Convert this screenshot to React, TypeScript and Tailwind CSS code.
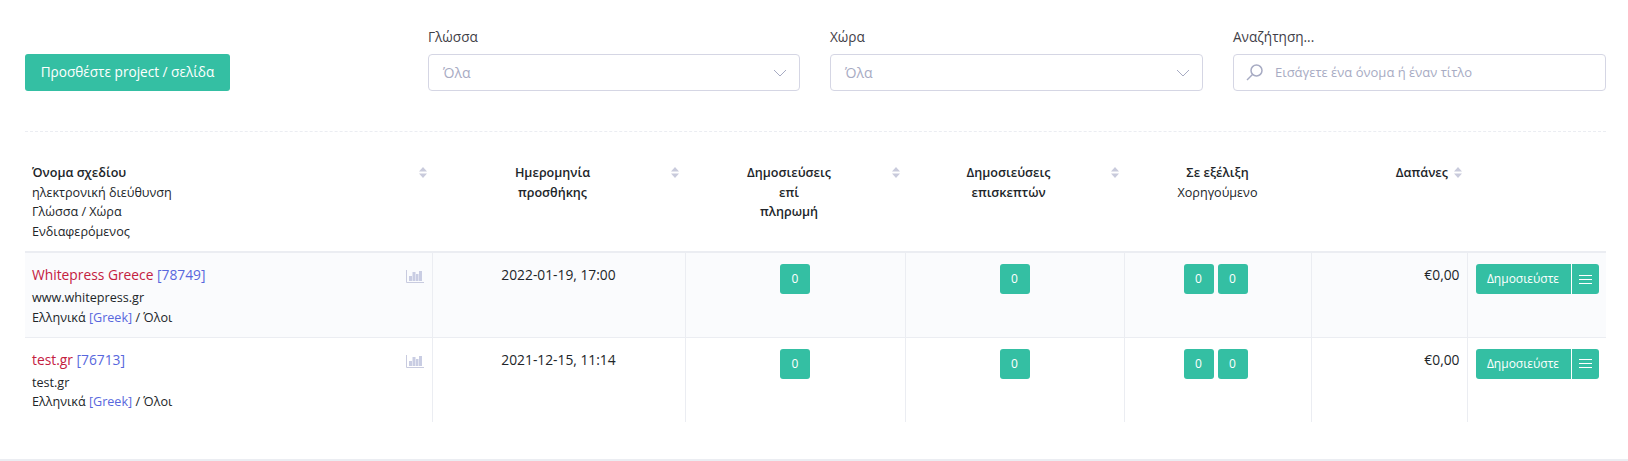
const FONT = "[font-family:'Open_Sans','Noto_Sans',sans-serif]";

function SortIcon({ className }: { className: string }) {
  return (
    <svg className={className} width="8" height="11" viewBox="0 0 8 11" fill="#c9cbdc">
      <path d="M4 0 L8 4.5 H0 Z" />
      <path d="M4 11 L8 6.5 H0 Z" />
    </svg>
  );
}

function Chevron() {
  return (
    <svg width="14" height="8" viewBox="0 0 14 8" fill="none" stroke="#a7abc3" strokeWidth="1">
      <path d="M1 1 L7 7 L13 1" />
    </svg>
  );
}

function ChartIcon() {
  return (
    <svg width="18" height="13" viewBox="0 0 18 13" className="absolute right-[8px] top-[17px]">
      <path d="M0.5 0 V12.5 H18" fill="none" stroke="#c8cbdf" strokeWidth="1" />
      <rect x="3" y="6" width="3" height="5" fill="#c9cde3" />
      <rect x="6.5" y="2" width="3" height="9" fill="#c9cde3" />
      <rect x="10" y="4" width="2.5" height="7" fill="#c9cde3" />
      <rect x="13" y="1" width="3" height="10" fill="#c9cde3" />
    </svg>
  );
}

function SearchIcon() {
  return (
    <svg width="17" height="17" viewBox="0 0 17 17" fill="none" stroke="#a7abc3" strokeWidth="1.5">
      <circle cx="10.5" cy="6.5" r="5.5" />
      <path d="M6.5 10.5 L1 16" />
    </svg>
  );
}

function Badge() {
  return (
    <span className="inline-flex h-[30px] w-[30px] items-center justify-center rounded-[3px] bg-[#34bfa3] text-[12px] text-white">
      0
    </span>
  );
}

function SelectField({ label }: { label: string }) {
  return (
    <div>
      <label className="mb-[7px] block text-[13.6px] leading-[20px] text-[#3f4047]">{label}</label>
      <div className="flex h-[37px] items-center justify-between rounded-[4px] border border-[#d5d6e4] pl-[14px] pr-[12px] text-[14px] text-[#a7abc3]">
        <span>Όλα</span>
        <Chevron />
      </div>
    </div>
  );
}

const rows = [
  { name: "Whitepress Greece", id: "[78749]", url: "www.whitepress.gr", date: "2022-01-19, 17:00", shaded: true },
  { name: "test.gr", id: "[76713]", url: "test.gr", date: "2021-12-15, 11:14", shaded: false },
];

export default function App() {
  return (
    <div className={`${FONT} flex h-[461px] flex-col bg-white text-[12.6px] text-[#212529]`}>
      <div className="pl-[25px] pr-[22px] pt-[27px]">
        <div className="grid grid-cols-[373px_372px_373px_373px] items-end gap-x-[30px] border-b border-dashed border-[#ebedf2] pb-[40px]">
          <div>
            <button className="h-[37px] w-[205px] rounded-[3px] bg-[#34bfa3] text-[13.6px] text-white">
              Προσθέστε project / σελίδα
            </button>
          </div>
          <SelectField label="Γλώσσα" />
          <SelectField label="Χώρα" />
          <div>
            <label className="mb-[7px] block text-[13.6px] leading-[20px] text-[#3f4047]">Αναζήτηση...</label>
            <div className="flex h-[37px] items-center gap-[12px] rounded-[4px] border border-[#d5d6e4] pl-[12px] text-[13px] text-[#a7abc3]">
              <SearchIcon />
              <span>Εισάγετε ένα όνομα ή έναν τίτλο</span>
            </div>
          </div>
        </div>

        <table className="mt-[31px] w-full table-fixed border-collapse leading-[19.5px]">
          <colgroup>
            <col className="w-[407px]" />
            <col className="w-[253px]" />
            <col className="w-[220px]" />
            <col className="w-[219px]" />
            <col className="w-[187px]" />
            <col className="w-[156px]" />
            <col className="w-[139px]" />
          </colgroup>
          <thead>
            <tr className="border-b-2 border-[#ebedf2] align-top">
              <th className="relative pb-[10px] pl-[7px] pr-[19px] text-left font-normal">
                <div className="font-semibold">Όνομα σχεδίου</div>
                <div>ηλεκτρονική διεύθυνση</div>
                <div>Γλώσσα / Χώρα</div>
                <div>Ενδιαφερόμενος</div>
                <SortIcon className="absolute right-[5px] top-[4px]" />
              </th>
              <th className="relative pb-[10px] pl-[7px] pr-[19px] text-center font-semibold">
                Ημερομηνία
                <br />
                προσθήκης
                <SortIcon className="absolute right-[6px] top-[4px]" />
              </th>
              <th className="relative pb-[10px] pl-[7px] pr-[19px] text-center font-semibold">
                Δημοσιεύσεις
                <br />
                επί
                <br />
                πληρωμή
                <SortIcon className="absolute right-[5px] top-[4px]" />
              </th>
              <th className="relative pb-[10px] pl-[7px] pr-[19px] text-center font-semibold">
                Δημοσιεύσεις
                <br />
                επισκεπτών
                <SortIcon className="absolute right-[5px] top-[4px]" />
              </th>
              <th className="pb-[10px] text-center font-normal">
                <div className="font-semibold">Σε εξέλιξη</div>
                <div>Χορηγούμενο</div>
              </th>
              <th className="relative pb-[10px] pr-[19px] text-right font-semibold">
                Δαπάνες
                <SortIcon className="absolute right-[5px] top-[4px]" />
              </th>
              <th />
            </tr>
          </thead>
          <tbody>
            {rows.map((row) => (
              <tr key={row.id} className={`h-[85px] border-b border-[#ebedf2] align-top last:border-b-0 ${row.shaded ? "bg-[#fafbfd]" : ""}`}>
                <td className="relative pl-[7px] pt-[11px]">
                  <div className="mb-[3px] text-[13.8px] leading-[21px]">
                    <span className="text-[#c4203f]">{row.name}</span> <span className="text-[#5867dd]">{row.id}</span>
                  </div>
                  <div>{row.url}</div>
                  <div>
                    Ελληνικά <span className="text-[#5867dd]">[Greek]</span> / Όλοι
                  </div>
                  <ChartIcon />
                </td>
                <td className="border-l border-[#ebedf2] pt-[12px] text-center text-[13.8px]">{row.date}</td>
                <td className="border-l border-[#ebedf2] pt-[11px] text-center">
                  <Badge />
                </td>
                <td className="border-l border-[#ebedf2] pt-[11px] text-center">
                  <Badge />
                </td>
                <td className="border-l border-[#ebedf2] pr-[4px] pt-[11px]">
                  <div className="flex justify-center gap-[4px]">
                    <Badge />
                    <Badge />
                  </div>
                </td>
                <td className="border-l border-[#ebedf2] pr-[7px] pt-[12px] text-right text-[13.8px]">€0,00</td>
                <td className="border-l border-[#ebedf2] pl-[8px] pt-[11px]">
                  <div className="flex h-[30px] w-[123px] rounded-[3px] bg-[#34bfa3] text-white">
                    <button className="w-[95px] text-[12px]">Δημοσιεύστε</button>
                    <button className="flex flex-1 items-center justify-center border-l border-white">
                      <svg width="13" height="11" viewBox="0 0 13 11" stroke="#fff" strokeWidth="1">
                        <path d="M0 1.5 H13 M0 5.5 H13 M0 9.5 H13" />
                      </svg>
                    </button>
                  </div>
                </td>
              </tr>
            ))}
          </tbody>
        </table>
      </div>
      <div className="mt-auto border-t-2 border-[#ebedf2]" />
    </div>
  );
}
